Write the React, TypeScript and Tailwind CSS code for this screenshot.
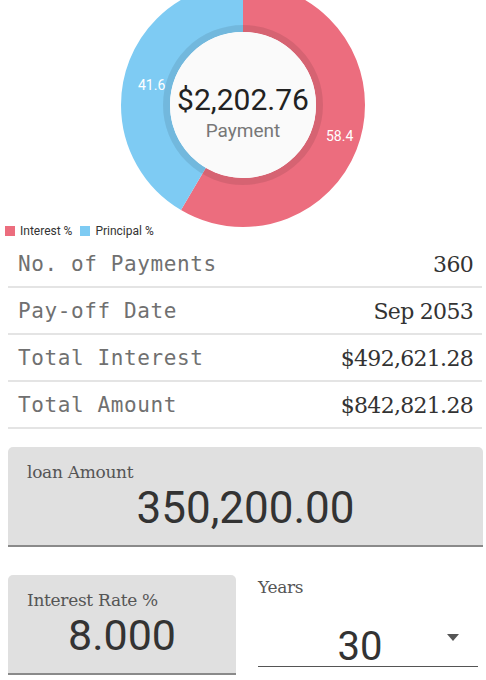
import React from 'react';

// Resumen de la hipoteca
const SUMMARY_ROWS = [
  { label: 'No. of Payments', value: '360' },
  { label: 'Pay-off Date', value: 'Sep 2053' },
  { label: 'Total Interest', value: '$492,621.28' },
  { label: 'Total Amount', value: '$842,821.28' },
];

const INTEREST_PCT = 58.4;

const DonutChart: React.FC = () => {
  const r = 97.5;
  const c = 2 * Math.PI * r;
  const red = (c * INTEREST_PCT) / 100;

  return (
    <div className="relative h-[225px] w-full flex justify-center">
      <svg width="246" height="246" viewBox="0 0 246 246" className="-mt-[18px] shrink-0">
        <g transform="rotate(-90 123 123)">
          <circle cx="123" cy="123" r={r} fill="none" stroke="#ec6d7e" strokeWidth="49" strokeDasharray={`${red} ${c}`} />
          <circle
            cx="123"
            cy="123"
            r={r}
            fill="none"
            stroke="#7ecbf3"
            strokeWidth="49"
            strokeDasharray={`${c - red} ${c}`}
            strokeDashoffset={-red}
          />
        </g>
        <circle cx="123" cy="123" r="76.5" fill="none" stroke="rgba(0,0,0,0.09)" strokeWidth="7" />
        <circle cx="123" cy="123" r="73" fill="#fafafa" />
      </svg>

      {/* Texto central */}
      <div className="absolute left-0 right-0 top-[81px] flex flex-col items-center font-['Roboto',sans-serif]">
        <span className="text-[30px] leading-[38px] text-[#222]">$2,202.76</span>
        <span className="text-[19px] leading-[24px] text-[#777]">Payment</span>
      </div>

      {/* Etiquetas del gráfico */}
      <span className="absolute left-[138px] top-[75px] text-[14px] text-white font-['Roboto',sans-serif]">41.6</span>
      <span className="absolute left-[326px] top-[126px] text-[14px] text-white font-['Roboto',sans-serif]">58.4</span>
    </div>
  );
};

const App: React.FC = () => {
  return (
    <div className="w-[486px] h-[680px] overflow-hidden bg-white">
      <DonutChart />

      {/* Leyenda */}
      <div className="flex items-center gap-[5px] pl-[5px] h-[12px] text-[12px] text-[#333] font-['Roboto',sans-serif]">
        <span className="w-[10px] h-[10px] bg-[#ec6d7e]" />
        <span className="mr-[3px]">Interest %</span>
        <span className="w-[10px] h-[10px] bg-[#7ecbf3]" />
        <span>Principal %</span>
      </div>

      {/* Tabla de resumen */}
      <div className="mx-[8px] mt-[4px] mr-[4px]">
        {SUMMARY_ROWS.map(row => (
          <div key={row.label} className="flex items-center justify-between h-[47px] border-b-2 border-[#e4e4e4] px-[10px] pr-[9px]">
            <span className="mt-[2px] text-[21px] text-[#707070] font-['DejaVu_Sans_Mono',monospace] tracking-[0.6px]">{row.label}</span>
            <span className="mt-[2px] text-[22px] text-[#333] font-['DejaVu_Serif',serif] tracking-[-0.7px]">{row.value}</span>
          </div>
        ))}
      </div>

      {/* Monto del préstamo */}
      <div className="mx-[8px] mr-[3px] mt-[18px] h-[100px] bg-[#e0e0e0] rounded-t-[5px] border-b-2 border-[#8a8a8a] flex flex-col px-[19px] pt-[14px]">
        <span className="text-[17px] leading-[22px] text-[#555] font-['DejaVu_Serif',serif] tracking-[-0.3px]">loan Amount</span>
        <span className="text-center text-[44px] leading-[50px] text-[#333] font-['Roboto',sans-serif]">350,200.00</span>
      </div>

      {/* Tasa de interés y años */}
      <div className="flex gap-[22px] mt-[28px] mx-[8px]">
        <div className="w-[228px] h-[100px] bg-[#e0e0e0] rounded-t-[5px] border-b-2 border-[#8a8a8a] flex flex-col px-[19px] pt-[14px] shrink-0">
          <span className="text-[17px] leading-[22px] text-[#555] font-['DejaVu_Serif',serif] tracking-[-0.3px]">Interest Rate %</span>
          <span className="text-center text-[43px] leading-[48px] text-[#333] font-['Roboto',sans-serif]">8.000</span>
        </div>
        <div className="w-[220px] flex flex-col">
          <span className="mt-[1px] text-[17px] leading-[22px] text-[#555] font-['DejaVu_Serif',serif] tracking-[-0.3px]">Years</span>
          <div className="relative mt-[25px] h-[44px] border-b border-[#555] flex items-center justify-center pr-[16px]">
            <span className="text-[40px] leading-[44px] text-[#333] font-['Roboto',sans-serif] mt-[4px]">30</span>
            <svg width="12" height="7" viewBox="0 0 12 7" className="absolute right-[19px] top-[11px]">
              <path d="M0 0h12L6 7z" fill="#555" />
            </svg>
          </div>
        </div>
      </div>
    </div>
  );
};

export default App;
